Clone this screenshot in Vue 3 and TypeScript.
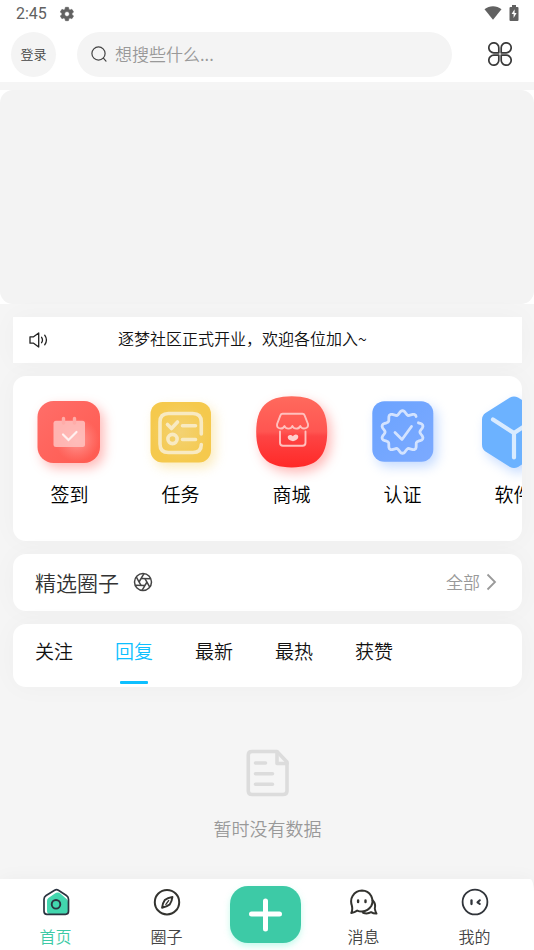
<script setup lang="ts">
import { ref } from 'vue'

type Shortcut = { id: string; label: string }

const shortcuts: Shortcut[] = [
  { id: 'sign', label: '签到' },
  { id: 'task', label: '任务' },
  { id: 'shop', label: '商城' },
  { id: 'verify', label: '认证' },
  { id: 'software', label: '软件' },
]

const tabs: string[] = ['关注', '回复', '最新', '最热', '获赞']
const activeTab = ref('回复')
const keyword = ref('')

// Outline of the ten-lobed verification badge, open at its upper right.
function badgePath(cx: number, cy: number): string {
  const points: string[] = []
  for (let i = 4; i <= 95; i++) {
    const angle = (i / 96) * Math.PI * 2 - Math.PI / 4
    const radius = 19.4 + 2 * Math.cos((angle + Math.PI / 2) * 10)
    points.push(`${(cx + radius * Math.cos(angle)).toFixed(1)} ${(cy + radius * Math.sin(angle)).toFixed(1)}`)
  }
  return 'M' + points.join('L')
}
const badge = badgePath(56.5, 50)
const blades: number[] = [0, 60, 120, 180, 240, 300]
</script>

<template>
  <div class="page">
    <div class="status">
      <div class="status-side">
        <span>2:45</span>
        <svg width="16" height="16" viewBox="0 0 24 24" fill="#616161"><path d="M19.4 13a7.500 7.500 0 0 0 0-2l2.100-1.600a.5.5 0 0 0 .1-.6l-2-3.500a.5.5 0 0 0-.6-.2l-2.500 1a7.300 7.300 0 0 0-1.700-1l-.4-2.600a.5.5 0 0 0-.5-.5h-4a.5.5 0 0 0-.5.5L9 5.100a7.700 7.700 0 0 0-1.700 1l-2.500-1a.5.5 0 0 0-.6.2l-2 3.500a.5.5 0 0 0 .1.6L4.500 11a8 8 0 0 0 0 2l-2.200 1.600a.5.5 0 0 0-.1.6l2 3.500c.1.200.4.300.6.200l2.500-1a7.300 7.300 0 0 0 1.700 1l.4 2.600c0 .300.2.500.5.500h4c.3 0 .5-.2.5-.5l.4-2.600a7.700 7.700 0 0 0 1.700-1l2.500 1c.2.100.5 0 .6-.2l2-3.500a.5.5 0 0 0-.1-.6zM12 15.700a3.700 3.700 0 1 1 0-7.400 3.700 3.700 0 0 1 0 7.400z" stroke="#616161" stroke-width="1" /></svg>
      </div>
      <div class="status-side">
        <svg width="18" height="14" viewBox="0 0 18 14"><path d="M.5 3.200C5.500-.8 12.500-.8 17.500 3.200L9 13.800z" fill="#616161" /></svg>
        <svg width="10" height="16" viewBox="0 0 10 16"><path d="M3 0h4v2h1.500q1 0 1 1v12q0 1-1 1h-7q-1 0-1-1V3q0-1 1-1H3z" fill="#616161" /><path d="M5.600 4.200 2.600 9h2v4l3-5h-2z" fill="#fff" /></svg>
      </div>
    </div>

    <header class="header">
      <button class="login" type="button">登录</button>
      <label class="search">
        <svg width="16" height="16" viewBox="0 0 16 16" fill="none" stroke="#444" stroke-width="1.200" stroke-linecap="round"><circle cx="7.500" cy="7.500" r="6.600" /><path d="m12.400 12.200 2.600 2.900" /></svg>
        <input v-model="keyword" type="text" placeholder="想搜些什么..." aria-label="搜索" />
      </label>
      <button class="menu" type="button" aria-label="菜单">
        <svg width="24" height="24" viewBox="0 0 24 24" fill="none" stroke="#3a3a3a" stroke-width="1.700" stroke-linejoin="round">
          <path d="M10.800 10.800H6a5 5 0 1 1 4.800-4.800z" />
          <path d="M13.200 10.800H18a5 5 0 1 0-4.800-4.800z" />
          <path d="M10.800 13.200H6a5 5 0 1 0 4.800 4.800z" />
          <path d="M13.200 13.200H18a5 5 0 1 1-4.800 4.800z" />
        </svg>
      </button>
    </header>

    <div class="banner-wrap"><div class="banner"></div></div>

    <main class="content">
      <section class="notice">
        <svg width="20" height="16" viewBox="0 0 20 16" fill="none" stroke="#222" stroke-width="1.300" stroke-linejoin="round" stroke-linecap="round"><path d="M1 4.800h3.600L9.700 1v14l-5.100-3.800H1z" /><path d="M12.600 5.300q1.800 2.700 0 5.400M15.700 3.200q3.500 4.800 0 9.600" /></svg>
        <p>逐梦社区正式开业，欢迎各位加入~</p>
      </section>

      <nav class="card shortcuts">
        <a v-for="item in shortcuts" :key="item.id" class="shortcut" href="#">
          <svg v-if="item.id === 'sign'" class="art" viewBox="1 0 111 100">
            <defs>
              <linearGradient id="signBg" x1="0" y1="0" x2="1" y2="1"><stop offset="0" stop-color="#ff6e69" /><stop offset="1" stop-color="#ff5a50" /></linearGradient>
              <radialGradient id="signGlow"><stop offset="0" stop-color="#ff9c98" /><stop offset="1" stop-color="#ff8a84" stop-opacity="0" /></radialGradient>
            </defs>
            <rect class="glow-red" x="24.500" y="19" width="62.500" height="62" rx="16" fill="url(#signBg)" />
            <circle cx="64" cy="58" r="22" fill="url(#signGlow)" />
            <rect x="40.500" y="38.700" width="31.500" height="26.300" rx="2.500" fill="#ffc2c0" fill-opacity=".85" />
            <path d="M50.500 36.500v4.500M61.500 36.500v4.500" stroke="#ffaca8" stroke-width="3.400" stroke-linecap="round" />
            <path d="m50 52.500 5.500 5.500 8-8" fill="none" stroke="#fff0ef" stroke-width="2.200" stroke-linecap="round" />
          </svg>
          <svg v-else-if="item.id === 'task'" class="art" viewBox="1 0 111 100">
            <defs><radialGradient id="taskBg"><stop offset="0" stop-color="#f3d273" /><stop offset="1" stop-color="#f5c94d" /></radialGradient></defs>
            <rect class="glow-yellow" x="26.500" y="20" width="60.500" height="60.500" rx="12" fill="url(#taskBg)" />
            <g fill="none" stroke="#f8eac2" stroke-width="3.600" stroke-linecap="round" stroke-linejoin="round">
              <path d="M77.300 52V40q0-8.500-8.500-8.500H44.500q-8.500 0-8.500 8.500v22q0 8.500 8.500 8.500h24.300q8.500 0 8.500-8" />
              <path d="m43.500 42.500 4 4 6-6.500M58.500 43.800h13M58.500 57.500h13" />
              <circle cx="48.500" cy="57" r="4.600" />
            </g>
          </svg>
          <svg v-else-if="item.id === 'shop'" class="art" viewBox="0 0 111 100">
            <defs><linearGradient id="shopBg" x1="0" y1="0" x2="0" y2="1"><stop offset="0" stop-color="#ff6a5d" /><stop offset=".5" stop-color="#ff5551" /><stop offset=".56" stop-color="#fd4444" /><stop offset="1" stop-color="#ff2927" /></linearGradient></defs>
            <path class="glow-red" d="M55.700 14.200C80.500 14.200 91.200 25 91.200 49.800S80.500 85.400 55.700 85.400 20.200 74.600 20.200 49.800 31 14.200 55.700 14.200z" fill="url(#shopBg)" />
            <g fill="none" stroke="#ffc0bd" stroke-width="1.900" stroke-linejoin="round" stroke-linecap="round">
              <path d="M46.500 31.800h20q1.500 0 2.100 1.500L72 42c.8 5-6 6-7.700 2-1.600 3.500-6.500 3.500-7.900 0-1.500 3.500-6.400 3.500-7.900 0-1.800 4-8.200 3-7.400-2l3.300-8.700q.6-1.500 2.100-1.500z" />
              <path d="M44 49.500v11.300q0 3 3 3h19.500q3 0 3-3V49.500" />
            </g>
            <path d="M57 59.200c-8-1.500-5.500-7.500-1.500-6 .8.400 1.500 1 1.500 1s.8-1.200 2-1.500c4-1 5.500 5-2 6.500z" fill="#ffd0ce" />
          </svg>
          <svg v-else-if="item.id === 'verify'" class="art" viewBox="1 0 111 100">
            <defs><linearGradient id="verifyBg" x1="0" y1="0" x2="1" y2="1"><stop offset="0" stop-color="#6ba3ff" /><stop offset="1" stop-color="#7caaff" /></linearGradient></defs>
            <rect class="glow-blue" x="26.300" y="19.300" width="61" height="60.500" rx="12" fill="url(#verifyBg)" />
            <g fill="none" stroke="#d3e3ff" stroke-width="2.800" stroke-linecap="round" stroke-linejoin="round">
              <path :d="badge" /><path d="m49 50.500 7 7 9.500-13" />
            </g>
          </svg>
          <svg v-else class="art" viewBox="1 0 111 100">
            <path class="glow-blue" d="M53 15.500q4-2 8 0l25 15.500q4 2.500 4 6.500v25q0 4-4 6.500L61 85q-4 2-8 0L28.500 69.500q-3.500-2.500-3.500-7v-25q0-4 3.500-6.500z" fill="#6cb2ff" />
            <path d="M36 37.500 57 51l21-13.500M57 51v24.500" fill="none" stroke="#d9ebff" stroke-width="4.200" stroke-linecap="round" />
          </svg>
          <span>{{ item.label }}</span>
        </a>
      </nav>

      <section class="card circles">
        <h2>精选圈子</h2>
        <svg width="20" height="20" viewBox="-10 -10 20 20" fill="none" stroke="#444" stroke-width="1.500">
          <circle r="8.500" />
          <path v-for="turn in blades" :key="turn" d="M4 0-1 8.400" :transform="`rotate(${turn})`" />
        </svg>
        <a class="more" href="#">全部
          <svg width="11" height="18" viewBox="0 0 11 18" fill="none" stroke="#999" stroke-width="1.800"><path d="M1.500 1.500 9 9l-7.500 7.500" /></svg>
        </a>
      </section>

      <div class="card tabs" role="tablist">
        <button
          v-for="tab in tabs"
          :key="tab"
          type="button"
          role="tab"
          :aria-selected="tab === activeTab"
          :class="['tab', { active: tab === activeTab }]"
          @click="activeTab = tab"
        >{{ tab }}</button>
      </div>

      <section class="empty">
        <svg width="44" height="48" viewBox="0 0 44 48" fill="none" stroke="#dcdcdc" stroke-width="3.600" stroke-linejoin="round" stroke-linecap="round">
          <path d="M31 2.500H6Q2.300 2.500 2.300 6v36q0 3.500 3.700 3.500h31q4 0 4-3.500V13z" />
          <path d="M31 3v11.500h10M9.500 14h10M9.500 24.700h17M9.500 35.200h17" />
        </svg>
        <p>暂时没有数据</p>
      </section>
    </main>

    <nav class="bottom">
      <a class="item current" href="#">
        <svg width="28" height="28" viewBox="0 0 28 28">
          <path d="M15.800 4.500q1.500 0 2.800 1.200l6 5.200q1.400 1.200 1.400 3V23q0 3-3 3H8q-3 0-3-3V13q0-1.800 1.400-3l6.500-4.500q1.400-1 2.900-1z" fill="#42d6ae" />
          <path d="M12.600 2.200q1.900-1.200 3.800 0l8 5.300q2.100 1.400 2.100 3.800V23.300q0 3-3 3H5q-3 0-3-3V11.300q0-2.400 2.100-3.800z" fill="none" stroke="#2b3440" stroke-width="1.700" />
          <circle cx="14" cy="16.300" r="4.300" fill="none" stroke="#2b3440" stroke-width="1.900" />
        </svg>
        <span>首页</span>
      </a>
      <a class="item" href="#">
        <svg width="28" height="28" viewBox="0 0 28 28" fill="none" stroke="#33332f" stroke-width="2" stroke-linejoin="round"><circle cx="14" cy="14.200" r="12.200" /><path d="M19.400 9q-.5 4.500-2.700 7.500-3 2.400-7.600 3.200.5-4.600 2.700-7.700Q14.700 9.700 19.400 9z" /><path d="m12.500 16.800 3.500-4.700" stroke-width="1.300" /></svg>
        <span>圈子</span>
      </a>
      <div class="publish-slot">
        <button class="publish" type="button" aria-label="发布">
          <svg width="34" height="34" viewBox="0 0 34 34" stroke="#fff" stroke-width="5" stroke-linecap="round"><path d="M17.500 3v28M3.500 16h28" /></svg>
        </button>
      </div>
      <a class="item" href="#">
        <svg width="28" height="28" viewBox="0 0 28 28" fill="none" stroke="#33332f" stroke-width="2" stroke-linejoin="round" stroke-linecap="round">
          <path d="M1.300 25q1.500-3.200.6-7.300Q0 12 2.600 8 6 2.700 12 2.600q6 .1 9.200 5.400 2.500 5 .2 9.800-3.200 5.400-9.400 5.800-2.500.1-4.800-1-2.600 1.800-5.900 2.400z" />
          <path d="M22.600 12.300q3.500 3.800 2.200 8.200.3 2.500 1.700 5.100-3.200.1-5.400-1.400-3.800 2.100-8.100.5" />
          <path d="M8.100 12.500v1.600M15.500 12.500v1.600" stroke-width="2.400" />
        </svg>
        <span>消息</span>
      </a>
      <a class="item" href="#">
        <svg width="28" height="28" viewBox="0 0 28 28" fill="none" stroke="#30343a" stroke-linecap="round" stroke-linejoin="round"><circle cx="14" cy="14" r="12.400" stroke-width="1.800" /><path d="M10.500 12.500v3.500" stroke-width="2.300" /><path d="m18.800 12.300-2.300 2 2.300 1.700" stroke-width="2.100" /></svg>
        <span>我的</span>
      </a>
    </nav>
  </div>
</template>

<style>
body {
  margin: 0;
  background: #f5f5f5;
}
</style>

<style scoped>
.page {
  display: flex;
  flex-direction: column;
  min-height: 100vh;
  overflow-x: clip;
  color: #111;
  font-family: "Noto Sans CJK SC", sans-serif;
  font-weight: 350;
}

button,
input {
  padding: 0;
  border: 0;
  background: none;
  color: inherit;
  font: inherit;
}

a {
  color: inherit;
  text-decoration: none;
}

h2,
p {
  margin: 0;
  font-weight: inherit;
}

svg {
  flex: none;
}

.status {
  display: flex;
  justify-content: space-between;
  height: 28px;
  padding: 0 15px 0 16px;
  background: #fff;
}

.status-side {
  display: flex;
  align-items: center;
  gap: 12px;
  color: #616161;
  font: 400 16px/28px Roboto, sans-serif;
}

.status-side:last-child {
  gap: 7px;
  padding-bottom: 3px;
}

.header {
  display: flex;
  align-items: center;
  padding: 4px 22px 5px 11px;
  background: #fff;
}

.login {
  width: 45px;
  height: 45px;
  padding-bottom: 2px;
  border-radius: 50%;
  background: #f4f4f4;
  color: #444;
  font-size: 13px;
}

.search {
  display: flex;
  flex: 1;
  align-items: center;
  gap: 8px;
  height: 45px;
  box-sizing: border-box;
  margin: 0 36px 0 21px;
  padding: 0 14px 2px;
  border-radius: 23px;
  background: #f4f4f4;
}

.search input {
  flex: 1;
  min-width: 0;
  outline: 0;
  font-size: 17px;
}

.search input::placeholder {
  color: #999;
  opacity: 1;
}

.menu {
  display: flex;
  padding-bottom: 2px;
}

.banner-wrap {
  margin-top: 8px;
  background: #fff;
}

.banner {
  height: 214px;
  border-radius: 13px;
  background: #f3f3f3;
}

.content {
  display: flex;
  flex: 1;
  flex-direction: column;
  gap: 13px;
  padding: 13px 12px 0 13px;
}

.notice,
.card {
  background: #fff;
  box-shadow: 0 0 27px rgba(0, 0, 0, 0.03);
}

.card {
  border-radius: 13px;
}

.notice {
  display: flex;
  align-items: center;
  gap: 69px;
  height: 46px;
  padding: 0 16px;
  color: #111;
  font-size: 16px;
}

.notice p {
  line-height: 24px;
  padding-bottom: 4px;
}

.shortcuts {
  display: flex;
  padding: 6px 0 35px 1px;
  overflow: hidden;
}

.shortcut {
  display: flex;
  flex: 0 0 111px;
  flex-direction: column;
  align-items: center;
  color: #000;
  font-size: 19px;
  line-height: 24px;
}

.art {
  width: 111px;
  height: 100px;
}

.glow-red {
  filter: drop-shadow(4px 5px 6px rgba(255, 80, 75, 0.4));
}

.glow-yellow {
  filter: drop-shadow(4px 5px 6px rgba(246, 205, 90, 0.4));
}

.glow-blue {
  filter: drop-shadow(4px 5px 6px rgba(110, 165, 255, 0.4));
}

.circles {
  display: flex;
  align-items: center;
  height: 57px;
  box-sizing: border-box;
  padding: 0 25px 2px 22px;
}

.circles h2 {
  margin-right: 14px;
  color: #333;
  font-size: 21px;
}

.more {
  display: flex;
  align-items: center;
  gap: 6px;
  margin-left: auto;
  color: #999;
  font-size: 17px;
}

.tabs {
  display: flex;
  padding-left: 1px;
}

.tab {
  display: flex;
  flex-direction: column;
  align-items: center;
  padding: 13px 21px 3px;
  font-size: 19px;
  line-height: 28px;
}

.tab::after {
  width: 28px;
  height: 3px;
  margin-top: 16px;
  border-radius: 1px;
  content: "";
}

.active {
  color: #0dbfff;
}

.active::after {
  background: #0dbfff;
}

.empty {
  display: flex;
  flex: 1;
  flex-direction: column;
  align-items: center;
  gap: 18px;
  padding: 49px 0 37px;
  color: #999;
  font-size: 18px;
  line-height: 26px;
}

.bottom {
  position: sticky;
  bottom: 0;
  display: flex;
  padding: 0 4px 0 0;
  border-top-right-radius: 4px 14px;
  background: #fff;
  box-shadow: 0 0 20px rgba(0, 0, 0, 0.04);
}

.item {
  display: flex;
  flex: 1;
  flex-direction: column;
  align-items: center;
  gap: 8px;
  padding: 9px 0 2px;
  color: #444;
  font-size: 16px;
  line-height: 24px;
}

.current {
  color: #3dcaa6;
}

.publish-slot {
  display: flex;
  flex: 0 0 86px;
  align-items: center;
  justify-content: center;
}

.publish {
  display: flex;
  align-items: center;
  justify-content: center;
  width: 71px;
  height: 57px;
  border-radius: 18px;
  background: #3dcaa6;
  box-shadow: 0 3px 6px rgba(90, 240, 200, 0.35);
}
</style>
